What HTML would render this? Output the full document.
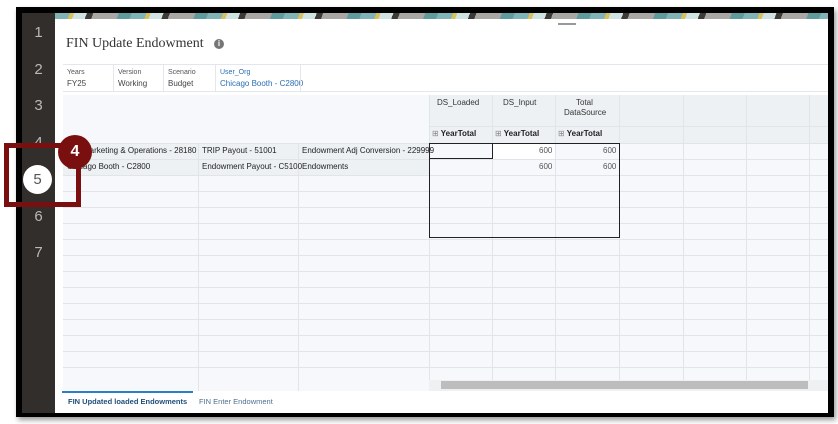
<!DOCTYPE html>
<html><head><style>
*{margin:0;padding:0;box-sizing:border-box}
body{width:838px;height:424px;background:#fff;position:relative;overflow:hidden;font-family:"Liberation Sans",sans-serif}
.abs{position:absolute}
.frame{left:16px;top:7px;width:818px;height:410px;background:#000;box-shadow:2px 3px 5px rgba(0,0,0,.4)}
.side{left:22px;top:13px;width:33px;height:400px;background:#312e2b}
.num{position:absolute;left:22px;width:33px;text-align:center;color:#bdbab5;font-size:15px}
.content{left:55px;top:13px;width:773px;height:400px;background:#fff;overflow:hidden}
.banner{left:0;top:0;width:773px;height:6px;background:repeating-linear-gradient(110deg,#7fb3b5 0 14px,#d8c15a 14px 18px,#cfe3e3 18px 30px,#3d3b38 30px 36px,#a9a7a3 36px 60px,#5f9a9c 60px 72px)}
.grid{left:8px;top:82px;width:765px;height:296px;background:#f6f8fb;overflow:hidden}
.vl{position:absolute;top:0;width:1px;height:296px;background:#e1e5ea}
.hl{position:absolute;left:0;height:1px;width:765px;background:#e1e5ea}
.t{position:absolute;font-size:8px;color:#222;white-space:nowrap}
</style></head><body>
<div class="abs frame"></div>
<div class="abs side"></div>
<div class="num" style="top:24px">1</div>
<div class="num" style="top:61px">2</div>
<div class="num" style="top:97px">3</div>
<div class="num" style="top:134px">4</div>
<div class="num" style="top:208px">6</div>
<div class="num" style="top:244px">7</div>
<div class="abs content">
 <div class="abs banner"></div>
 <div class="abs" style="left:503px;top:10px;width:18px;height:2px;background:#999"></div>
 <div class="abs" style="left:11px;top:23px;font-family:'Liberation Serif',serif;font-size:14px;color:#333">FIN Update Endowment</div>
 <div class="abs" style="left:159px;top:26px;width:10px;height:10px;border-radius:50%;background:#777;color:#fff;font-size:8px;text-align:center;line-height:10px;font-weight:bold">i</div>
 <div class="abs" style="left:8px;top:51px;width:765px;height:28px;border-top:1px solid #e3e7ec;border-bottom:1px solid #e3e7ec"></div>
 <div class="abs" style="left:8px;top:52px;width:238px;height:26px">
  <div class="t" style="left:4px;top:4px;font-size:7px;color:#555">Years</div><div class="t" style="left:4px;top:14px;color:#444">FY25</div>
  <div class="t" style="left:55px;top:4px;font-size:7px;color:#555">Version</div><div class="t" style="left:55px;top:14px;color:#444">Working</div>
  <div class="t" style="left:105px;top:4px;font-size:7px;color:#555">Scenario</div><div class="t" style="left:105px;top:14px;color:#444">Budget</div>
  <div class="t" style="left:157px;top:4px;font-size:7px;color:#2b6fb0">User_Org</div><div class="t" style="left:157px;top:14px;color:#2b6fb0">Chicago Booth - C2800</div>
  <div class="abs" style="left:50px;top:0;width:1px;height:26px;background:#e3e7ec"></div>
  <div class="abs" style="left:100px;top:0;width:1px;height:26px;background:#e3e7ec"></div>
  <div class="abs" style="left:152px;top:0;width:1px;height:26px;background:#e3e7ec"></div>
  <div class="abs" style="left:237px;top:0;width:1px;height:26px;background:#e3e7ec"></div>
 </div>
 <div class="abs grid">
  <div class="abs" style="left:366px;top:0;width:399px;height:48px;background:#eef1f4"></div>
  <div class="abs" style="left:0;top:48px;width:366px;height:32px;background:#eef1f4"></div>
  <div class="vl" style="left:135px;top:48px"></div><div class="vl" style="left:235px;top:48px"></div>
  <div class="vl" style="left:366px"></div><div class="vl" style="left:429px"></div><div class="vl" style="left:492px"></div><div class="vl" style="left:556px"></div><div class="vl" style="left:620px"></div><div class="vl" style="left:683px"></div><div class="vl" style="left:746px"></div>
  <div class="hl" style="top:31px;left:366px;width:399px"></div>
  <div class="hl" style="top:48px"></div><div class="hl" style="top:64px"></div><div class="hl" style="top:80px"></div>
  <div class="hl" style="top:96px"></div><div class="hl" style="top:112px"></div><div class="hl" style="top:128px"></div><div class="hl" style="top:144px"></div><div class="hl" style="top:160px"></div><div class="hl" style="top:176px"></div><div class="hl" style="top:192px"></div><div class="hl" style="top:208px"></div><div class="hl" style="top:224px"></div><div class="hl" style="top:240px"></div><div class="hl" style="top:256px"></div><div class="hl" style="top:272px"></div>
  <div class="t" style="left:374px;top:3px;color:#333">DS_Loaded</div>
  <div class="t" style="left:440px;top:3px;color:#333">DS_Input</div>
  <div class="t" style="left:513px;top:3px;color:#333">Total</div>
  <div class="t" style="left:501px;top:13px;color:#333">DataSource</div>
  <div class="t" style="left:369px;top:34px;font-weight:bold"><span style="font-weight:normal;color:#888">⊞</span> YearTotal</div>
  <div class="t" style="left:432px;top:34px;font-weight:bold"><span style="font-weight:normal;color:#888">⊞</span> YearTotal</div>
  <div class="t" style="left:495px;top:34px;font-weight:bold"><span style="font-weight:normal;color:#888">⊞</span> YearTotal</div>
  <div class="t" style="left:4px;top:51px">Mar Marketing &amp; Operations - 28180</div>
  <div class="t" style="left:139px;top:51px">TRIP Payout - 51001</div>
  <div class="t" style="left:239px;top:51px">Endowment Adj Conversion - 229999</div>
  <div class="t" style="left:4px;top:67px">Chicago Booth - C2800</div>
  <div class="t" style="left:139px;top:67px">Endowment Payout - C5100</div>
  <div class="t" style="left:239px;top:67px">Endowments</div>
  <div class="abs" style="left:430px;top:49px;width:62px;height:15px;background:#fff"></div>
  <div class="t" style="left:476px;top:51px;color:#555">600</div>
  <div class="t" style="left:540px;top:51px;color:#555">600</div>
  <div class="t" style="left:476px;top:67px;color:#555">600</div>
  <div class="t" style="left:540px;top:67px;color:#555">600</div>
  <div class="abs" style="left:366px;top:48px;width:191px;height:95px;border:1.5px solid #222"></div>
  <div class="abs" style="left:367px;top:48px;width:63px;height:16px;border-right:1.5px solid #222;border-bottom:1.5px solid #222"></div>
  <div class="abs" style="left:366px;top:285px;width:399px;height:11px;background:#eef0f2"></div>
  <div class="abs" style="left:378px;top:286px;width:367px;height:8px;background:#bdbdbd"></div>
 </div>
 <div class="abs" style="left:7px;top:378px;width:131px;height:2px;background:#2b7fc4"></div>
 <div class="t" style="left:13px;top:384px;font-weight:bold;color:#1f4f7a;font-size:7.5px">FIN Updated loaded Endowments</div>
 <div class="t" style="left:144px;top:384px;color:#4f6f8f;font-size:7.5px">FIN Enter Endowment</div>
</div>
<div class="abs" style="left:4px;top:143px;width:77px;height:64px;border:5px solid #7a0f0f"></div>
<div class="abs" style="left:23px;top:165px;width:29px;height:29px;border-radius:50%;background:#fff;color:#555;font-size:15px;text-align:center;line-height:29px">5</div>
<div class="abs" style="left:58px;top:135px;width:34px;height:34px;border-radius:50%;background:#7a0f0f;color:#fff;font-size:16px;font-weight:bold;text-align:center;line-height:34px">4</div>
</body></html>
